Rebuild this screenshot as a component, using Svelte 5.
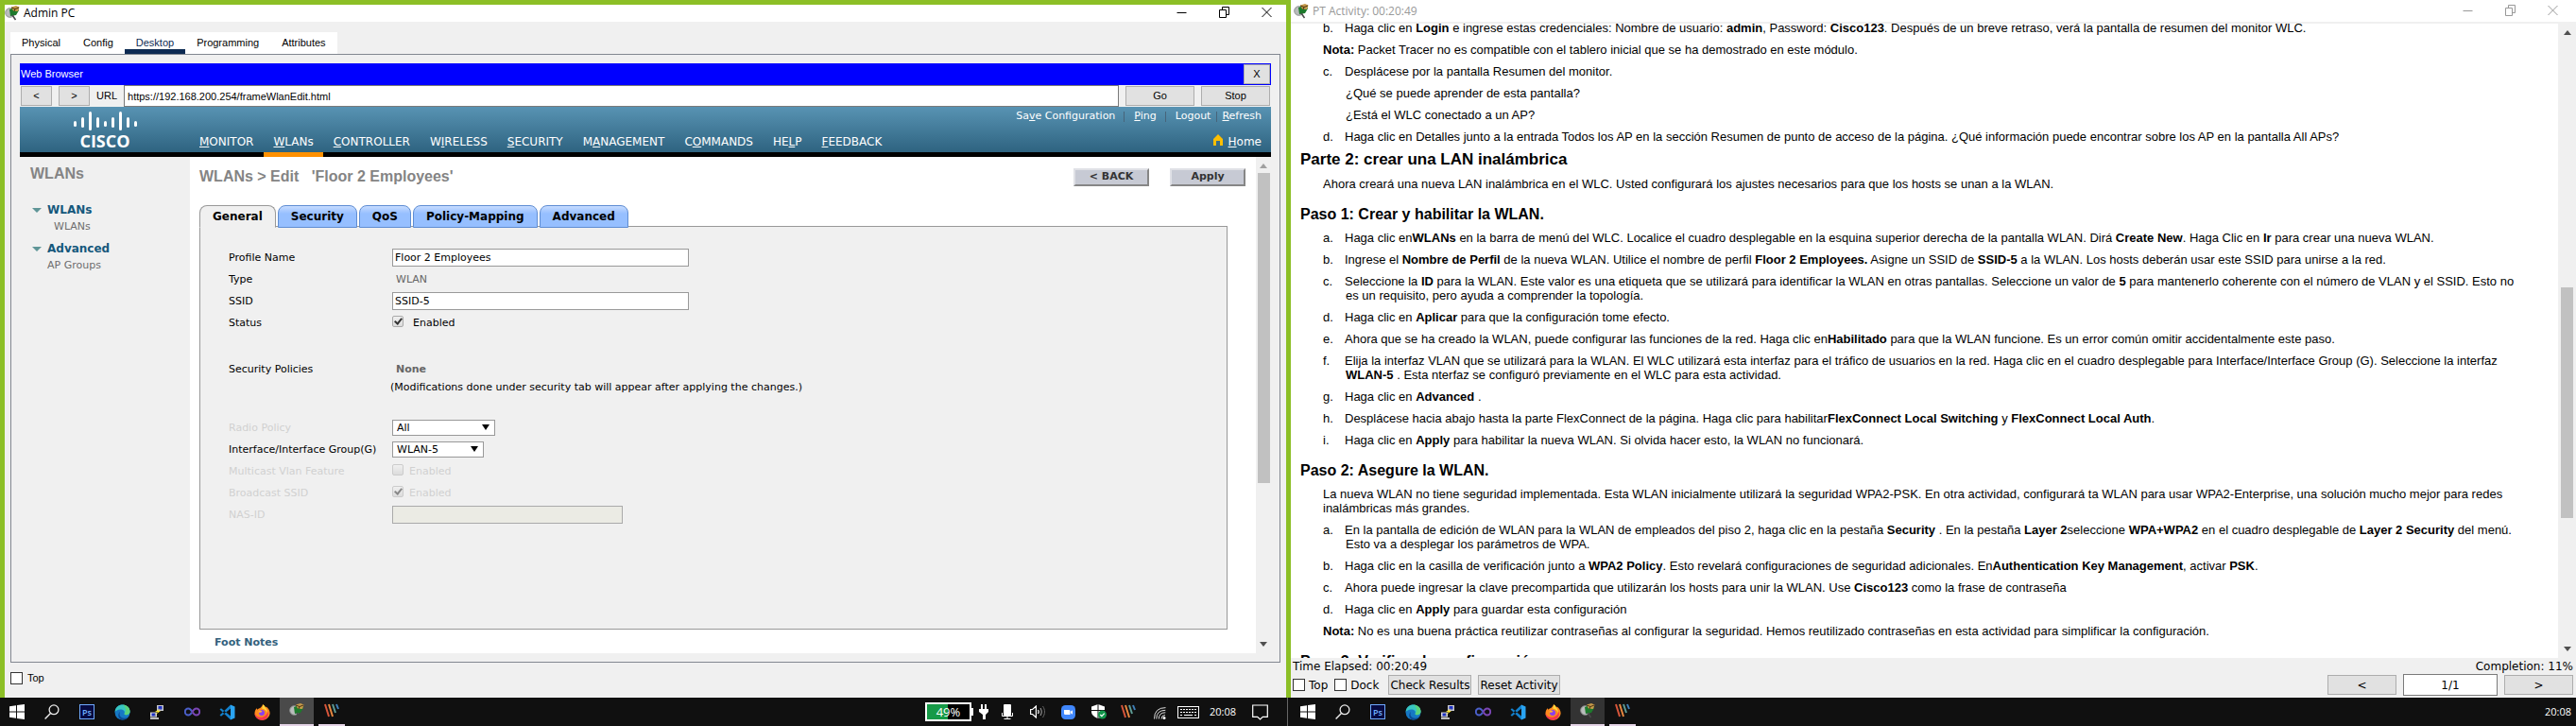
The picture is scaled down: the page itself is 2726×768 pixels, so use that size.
<script>
  const tabs = ['Physical', 'Config', 'Desktop', 'Programming', 'Attributes'];
  const menu = [
    ['', 'M', 'ONITOR'], ['', 'W', 'LANs'], ['', 'C', 'ONTROLLER'], ['W', 'I', 'RELESS'],
    ['', 'S', 'ECURITY'], ['M', 'A', 'NAGEMENT'], ['C', 'O', 'MMANDS'], ['HE', 'L', 'P'], ['', 'F', 'EEDBACK']
  ];
  const links = [['Sa', 'v', 'e Configuration'], ['', 'P', 'ing'], ['Logout', '', ''], ['', 'R', 'efresh']];
  const wlanTabs = ['General', 'Security', 'QoS', 'Policy-Mapping', 'Advanced'];
  const logoBars = [[2, 11, 6], [10, 7, 11], [18, 1, 20], [26, 7, 11], [34, 11, 6], [42, 7, 11], [50, 1, 20], [58, 7, 11], [66, 11, 6]];

  let profile = $state('Floor 2 Employees');
  let ssid = $state('SSID-5');
  let url = $state('https://192.168.200.254/frameWlanEdit.html');
  let page = $state('1/1');
</script>

{#snippet tracer()}
  <svg width="16" height="16" viewBox="0 0 16 16" aria-hidden="true">
    <circle cx="5.500" cy="7.500" r="4.800" fill="#b9bcbc" stroke="#8d9090" />
    <path d="M5 4 13 1l2 4-3 5-6 1z" fill="#1d7a2c" />
    <path d="M7 1.500 12 0l3.500 1.500L14 6l-5-.5z" fill="#c79a4a" />
    <path d="m7 2 4 1.500L15 2m-4 1.500L10 6" stroke="#4b3512" fill="none" />
    <path d="m8 10 3.500 5" stroke="#4a4a4a" stroke-width="1.500" />
  </svg>
{/snippet}

{#snippet controls()}
  <div class="controls">
    <button aria-label="Minimizar"><svg width="11" height="12" viewBox="0 0 11 12"><path d="M.5 6.500h10" stroke="currentColor" /></svg></button>
    <button aria-label="Maximizar"><svg width="11" height="12" viewBox="0 0 11 12"><path d="M.5 3.500h7v8h-7zM3.500 3.500v-3h7v8h-3" stroke="currentColor" fill="none" /></svg></button>
    <button aria-label="Cerrar"><svg width="11" height="12" viewBox="0 0 11 12"><path d="m.5 1 10 10m0-10-10 10" stroke="currentColor" /></svg></button>
  </div>
{/snippet}

{#snippet stripes()}
  <svg width="17" height="16" viewBox="0 0 17 16" aria-hidden="true">
    <path d="m1 1 4 13" stroke="#d8563b" stroke-width="2" />
    <path d="m5 1 4 13" stroke="#e8873f" stroke-width="2" />
    <path d="m9 1 3 9" stroke="#5e9c94" stroke-width="2" />
    <path d="m13 1 2 5" stroke="#3f7fb8" stroke-width="2" />
  </svg>
{/snippet}

{#snippet apps()}
  <nav class="apps" aria-label="Aplicaciones">
    <button aria-label="Inicio"><svg width="16" height="16" viewBox="0 0 16 16"><path d="M0 2.300 7 1.300v6.200H0zM8 1.100 16 0v7.500H8zM0 8.500h7v6.200l-7-1zM8 8.500h8V16l-8-1.100z" fill="#fff" /></svg></button>
    <button aria-label="Buscar"><svg width="16" height="16" viewBox="0 0 16 16"><circle cx="10" cy="5.800" r="4.900" fill="none" stroke="#eee" stroke-width="1.300" /><path d="M6.500 9.500.6 15.500" stroke="#eee" stroke-width="1.400" /></svg></button>
    <button aria-label="Photoshop"><svg width="16" height="16" viewBox="0 0 16 16"><rect x=".5" y=".5" width="15" height="15" fill="#060a42" stroke="#6fa9ff" /><text x="8" y="11.500" text-anchor="middle" font-family="Open Sans, sans-serif" font-size="9" font-weight="600" fill="#6fb0ff">Ps</text></svg></button>
    <button aria-label="Edge"><svg width="17" height="17" viewBox="0 0 17 17"><circle cx="8.500" cy="8.500" r="8" fill="#1678c4" /><path d="M.6 8C1 3 5 .3 9 .5c4.500.2 7.500 3.500 7.500 7 0 3-2.500 4-4.500 3.700-1.500-.2-1.700-1-1.200-2C11.500 7 9 5.300 6.500 5.500 3.500 5.700 1.300 7 .6 8z" fill="#38c7c0" /><path d="M9 .5c4.500.2 7.500 3.500 7.500 7 0 3-2.500 4-4.500 3.700-1-.2-1.500-.7-1.400-1.300C13 8 12.500 3 9 .5z" fill="#5ad27b" /><path d="M6 8c-1.300 3 0 6.500 4.500 6.700 2 0 3.700-.6 4.900-1.600C13.500 16 10.500 17 8 16.400 4 15.500 3 10.500 6 8z" fill="#0c4a93" /></svg></button>
    <button aria-label="PuTTY"><svg width="16" height="16" viewBox="0 0 16 16"><path d="M8 1h7v6H8z" fill="#c9c9c9" /><path d="M9.500 2h4v3.500h-4z" fill="#1a2fc4" /><path d="M1 8.500h7v5H1z" fill="#d5d5d5" /><path d="M2.500 9.500h4v3h-4z" fill="#1a2fc4" /><path d="M1 14h9v2H1z" fill="#bbb" /><path d="m12 4-6 4h3l-4 4 7-5H9z" fill="#ffe92e" /></svg></button>
    <button aria-label="Visual Studio"><svg width="17" height="10" viewBox="0 0 17 10"><path d="M8.500 5C7 2.500 5.800 1.500 4.300 1.500a3.500 3.500 0 0 0 0 7C5.800 8.500 7 7.500 8.500 5" fill="none" stroke="#4a5fc9" stroke-width="2" /><path d="M8.500 5c1.500-2.500 2.700-3.500 4.200-3.500a3.500 3.500 0 0 1 0 7C11.200 8.500 10 7.500 8.500 5" fill="none" stroke="#7b46b5" stroke-width="2" /></svg></button>
    <button aria-label="Visual Studio Code"><svg width="17" height="17" viewBox="0 0 17 17"><path d="M12 .5v4L2 12.800.5 11.500zM12 16.500v-4L2 4.200.5 5.500z" fill="#1380cc" /><path d="m12 .5 4.500 2v12l-4.500 2z" fill="#2aa4f2" /></svg></button>
    <button aria-label="Firefox"><svg width="17" height="17" viewBox="0 0 17 17"><path d="M9 .3c2 1 2.500 2.200 2.900 3.200l.8-1c2.500 2 4 4.500 3.900 7-.2 4-3.700 7.200-8 7.200S.5 13.500.5 9.500C.5 7.500 1.500 5.500 2.700 4c0 .8.200 1.500.6 1.800C4.300 4.600 5 4.300 6 4.200 7 3.500 8.700 2 9 .3z" fill="#ff8a1e" /><path d="M.5 9.500c1 3.500 5 5 8.500 4 3-.9 5-3 5.500-6 1.500 5-1.500 9.200-6 9.200-4.500 0-8-3-8-7.200z" fill="#f5364d" /><path d="M9 .3c2 1 2.500 2.200 2.900 3.200 1.500 1.800 2 3.500 1.600 5.500C12.500 6 10.500 5 8 4.500 8.800 3 9 2 9 .3z" fill="#ffd43b" /><circle cx="8" cy="9" r="3" fill="#8b3ff0" /><path d="M5 6.800c1.500-.5 2.500 0 3.500 1-1 1-2.500 1.200-4 .7z" fill="#ffb52b" /></svg></button>
    <button class="open" aria-label="Packet Tracer">{@render tracer()}</button>
    <button class="running" aria-label="Webex">{@render stripes()}</button>
  </nav>
{/snippet}

{#snippet scroll(before, thumb, after)}
  <div class="scroll" aria-hidden="true">
    <svg width="8" height="5" viewBox="0 0 8 5"><path d="M0 5 4 0l4 5z" fill="currentColor" /></svg>
    <div class="track">
      <i style="flex-grow: {before}"></i><b style="flex-grow: {thumb}"></b><i style="flex-grow: {after}"></i>
    </div>
    <svg class="down" width="8" height="5" viewBox="0 0 8 5"><path d="M0 0h8L4 5z" fill="#505050" /></svg>
  </div>
{/snippet}

<main class="screens">
  <section class="screen">
    <div class="window framed">
      <header class="title">
        {@render tracer()}<span>Admin PC</span>{@render controls()}
      </header>
      <div class="device">
        <nav class="device-tabs">
          {#each tabs as t}
            <button class:active={t === 'Desktop'}>{t}</button>
          {/each}
        </nav>
        <div class="frame">
          <div class="browser-title"><span>Web Browser</span><button class="flat">X</button></div>
          <div class="address">
            <button class="flat arrow">&lt;</button>
            <button class="flat arrow">&gt;</button>
            <label for="url">URL</label>
            <input id="url" bind:value={url} />
            <button class="flat wide">Go</button>
            <button class="flat wide">Stop</button>
          </div>

          <header class="cisco">
            <div class="logo">
              <svg width="70" height="43" viewBox="0 0 70 43" role="img" aria-label="Cisco">
                {#each logoBars as [x, y, h]}
                  <rect x={x - 1} {y} width="3" height={h} rx="1.500" fill="#fff" />
                {/each}
                <text x="34" y="39" text-anchor="middle" font-family="Open Sans, sans-serif" font-size="18" font-weight="700" fill="#fff">CISCO</text>
              </svg>
            </div>
            <div class="bars">
              <div class="links">
                {#each links as [a, k, b]}<a href="#top">{a}<u>{k}</u>{b}</a>{/each}
              </div>
              <nav class="menu">
                {#each menu as [a, k, b], i}<a href="#top" class:active={i === 1}>{a}<u>{k}</u>{b}</a>{/each}
                <a class="home" href="#top"><svg width="10" height="12" viewBox="0 0 10 12" aria-hidden="true"><path d="M5 0 0 5v7h3V7h4v5h3V5z" fill="#fdbf00" /></svg><span><u>H</u>ome</span></a>
              </nav>
            </div>
          </header>

          <div class="page">
            <aside>
              <h2>WLANs</h2>
              <h3><i></i>WLANs</h3>
              <a class="deep" href="#top">WLANs</a>
              <h3><i></i>Advanced</h3>
              <a href="#top">AP Groups</a>
            </aside>
            <div class="content">
              <div class="heading">
                <h2>WLANs &gt; Edit &nbsp; 'Floor 2 Employees'</h2>
                <button class="raised">&lt; BACK</button>
                <button class="raised">Apply</button>
              </div>
              <div class="wlan-tabs">
                {#each wlanTabs as t, i}<button class:active={i === 0}>{t}</button>{/each}
              </div>
              <form class="panel">
                <div class="row"><label for="profile">Profile Name</label><input id="profile" class="text" bind:value={profile} /></div>
                <div class="row"><span>Type</span><span class="value">WLAN</span></div>
                <div class="row"><label for="ssid">SSID</label><input id="ssid" class="text" bind:value={ssid} /></div>
                <div class="row"><span>Status</span><label class="check spaced"><input type="checkbox" checked />Enabled</label></div>
                <div class="row policies"><span>Security Policies</span><b class="value">None</b></div>
                <p>(Modifications done under security tab will appear after applying the changes.)</p>
                <div class="row off"><label for="radio">Radio Policy</label><span class="select"><select id="radio" class="radio"><option>All</option></select></span></div>
                <div class="row"><label for="iface">Interface/Interface Group(G)</label><span class="select"><select id="iface"><option>WLAN-5</option></select></span></div>
                <div class="row off"><span>Multicast Vlan Feature</span><label class="check"><input type="checkbox" disabled />Enabled</label></div>
                <div class="row off"><span>Broadcast SSID</span><label class="check"><input type="checkbox" checked disabled />Enabled</label></div>
                <div class="row off"><label for="nas">NAS-ID</label><input id="nas" class="text short" disabled /></div>
              </form>
              <h4>Foot Notes</h4>
            </div>
            {@render scroll(0, 329, 164)}
          </div>
        </div>
        <label class="box top"><input type="checkbox" />Top</label>
      </div>
    </div>
    <footer class="taskbar">
      {@render apps()}
      <div class="tray">
        <div class="battery">49%</div>
        <svg width="10" height="16" viewBox="0 0 10 16" aria-hidden="true"><path d="M2 0h2v5h2V0h2v5h2v3L7 11v5H4v-5L0 8V5h2z" fill="#fff" /></svg>
        <svg class="mic" width="12" height="16" viewBox="0 0 12 16" aria-hidden="true"><rect x="2" width="8" height="12" rx="1" fill="#fff" /><path d="M.5 9v3.500h11V9M6 13v2.500M2.500 15.500h7" stroke="#fff" fill="none" /></svg>
        <svg class="sound" width="17" height="14" viewBox="0 0 17 14" aria-hidden="true"><path d="M.6 4.500h2l3.800-3.500v12L2.600 9.500h-2zM8.500 5c.8 1.300.8 2.700 0 4" stroke="#fff" fill="none" stroke-width="1.200" /><path d="M11 3c1.600 2.500 1.600 5.500 0 8" stroke="#aaa" fill="none" /><path d="M13.500 1c2.600 3.700 2.600 8.300 0 12" stroke="#666" fill="none" /></svg>
        <svg class="zoom" width="15" height="15" viewBox="0 0 15 15" aria-hidden="true"><rect width="15" height="15" rx="4.500" fill="#4087fc" /><path d="M3 5h5.200q1.300 0 1.300 1.300V10H4.300Q3 10 3 8.700zM10 6.700 12 5.200v4.600l-2-1.500z" fill="#fff" /></svg>
        <svg class="shield" width="16" height="16" viewBox="0 0 16 16" aria-hidden="true"><path d="M7 0 14 2.500V8c0 3-3 5.500-7 7C3 13.500 0 11 0 8V2.500z" fill="#fff" /><path d="M7 0v15M0 6.500h14" stroke="#101010" /><circle cx="11.500" cy="11" r="4.500" fill="#12964a" /><path d="m9.300 11 1.600 1.600 2.800-3" stroke="#fff" fill="none" stroke-width="1.200" /></svg>
        {@render stripes()}
        <svg class="wifi" width="13" height="13" viewBox="0 0 13 13" aria-hidden="true"><circle cx="11" cy="11.500" r="1.500" fill="#fff" /><path d="M8 12.500q0-4 4-4M5.300 12.500q0-6.700 7-6.700M2.800 12.500Q2.800 3.300 12.300 3.300M.5 12.500Q.5.600 12.500.600" stroke="#ddd" fill="none" /></svg>
        <svg class="keys" width="23" height="13" viewBox="0 0 23 13" aria-hidden="true"><rect x=".5" y=".5" width="22" height="12" fill="none" stroke="#fff" /><path d="M3 3.500h17M3 6.500h17" stroke="#fff" stroke-dasharray="2 1" /><path d="M3 9.500h2m2 0h9m2 0h2" stroke="#fff" /></svg>
        <time>20:08</time>
        <svg class="note" width="17" height="17" viewBox="0 0 17 17" aria-hidden="true"><path d="M.7 1h15.600v12.300h-5L8.500 16l-2.800-2.700h-5z" fill="none" stroke="#fff" stroke-width="1.200" /></svg>
      </div>
    </footer>
  </section>

  <section class="screen">
    <div class="window">
      <header class="title idle">
        {@render tracer()}<span>PT Activity: 00:20:49</span>{@render controls()}
      </header>
      <div class="reader">
        <article>
          <p class="item"><span>b.</span>Haga clic en <b>Login</b> e ingrese estas credenciales: Nombre de usuario: <b>admin</b>, Password: <b>Cisco123</b>. Después de un breve retraso, verá la pantalla de resumen del monitor WLC.</p>
          <p><b>Nota:</b> Packet Tracer no es compatible con el tablero inicial que se ha demostrado en este módulo.</p>
          <p class="item"><span>c.</span>Desplácese por la pantalla Resumen del monitor.</p>
          <p class="question">¿Qué se puede aprender de esta pantalla?</p>
          <p class="question">¿Está el WLC conectado a un AP?</p>
          <p class="item"><span>d.</span>Haga clic en Detalles junto a la entrada Todos los AP en la sección Resumen de punto de acceso de la página. ¿Qué información puede encontrar sobre los AP en la pantalla All APs?</p>
          <h2>Parte 2: crear una LAN inalámbrica</h2>
          <p>Ahora creará una nueva LAN inalámbrica en el WLC. Usted configurará los ajustes necesarios para que los hosts se unan a la WLAN.</p>
          <h3>Paso 1: Crear y habilitar la WLAN.</h3>
          <p class="item"><span>a.</span>Haga clic en<b>WLANs</b> en la barra de menú del WLC. Localice el cuadro desplegable en la esquina superior derecha de la pantalla WLAN. Dirá <b>Create New</b>. Haga Clic en <b>Ir</b> para crear una nueva WLAN.</p>
          <p class="item"><span>b.</span>Ingrese el <b>Nombre de Perfil</b> de la nueva WLAN. Utilice el nombre de perfil <b>Floor 2 Employees.</b> Asigne un SSID de <b>SSID-5</b> a la WLAN. Los hosts deberán usar este SSID para unirse a la red.</p>
          <p class="item"><span>c.</span>Seleccione la <b>ID</b> para la WLAN. Este valor es una etiqueta que se utilizará para identificar la WLAN en otras pantallas. Seleccione un valor de <b>5</b> para mantenerlo coherente con el número de VLAN y el SSID. Esto no es un requisito, pero ayuda a comprender la topología.</p>
          <p class="item"><span>d.</span>Haga clic en <b>Aplicar</b> para que la configuración tome efecto.</p>
          <p class="item"><span>e.</span>Ahora que se ha creado la WLAN, puede configurar las funciones de la red. Haga clic en<b>Habilitado</b> para que la WLAN funcione. Es un error común omitir accidentalmente este paso.</p>
          <p class="item"><span>f.</span>Elija la interfaz VLAN que se utilizará para la WLAN. El WLC utilizará esta interfaz para el tráfico de usuarios en la red. Haga clic en el cuadro desplegable para Interface/Interface Group (G). Seleccione la interfaz <b>WLAN-5</b> . Esta nterfaz se configuró previamente en el WLC para esta actividad.</p>
          <p class="item"><span>g.</span>Haga clic en <b>Advanced</b> .</p>
          <p class="item"><span>h.</span>Desplácese hacia abajo hasta la parte FlexConnect de la página. Haga clic para habilitar<b>FlexConnect Local Switching</b> y <b>FlexConnect Local Auth</b>.</p>
          <p class="item"><span>i.</span>Haga clic en <b>Apply</b> para habilitar la nueva WLAN. Si olvida hacer esto, la WLAN no funcionará.</p>
          <h3>Paso 2: Asegure la WLAN.</h3>
          <p>La nueva WLAN no tiene seguridad implementada. Esta WLAN inicialmente utilizará la seguridad WPA2-PSK. En otra actividad, configurará ta WLAN para usar WPA2-Enterprise, una solución mucho mejor para redes inalámbricas más grandes.</p>
          <p class="item"><span>a.</span>En la pantalla de edición de WLAN para la WLAN de empleados del piso 2, haga clic en la pestaña <b>Security</b> . En la pestaña <b>Layer 2</b>seleccione <b>WPA+WPA2</b> en el cuadro desplegable de <b>Layer 2 Security</b> del menú. Esto va a desplegar los parámetros de WPA.</p>
          <p class="item"><span>b.</span>Haga clic en la casilla de verificación junto a <b>WPA2 Policy</b>. Esto revelará configuraciones de seguridad adicionales. En<b>Authentication Key Management</b>, activar <b>PSK</b>.</p>
          <p class="item"><span>c.</span>Ahora puede ingresar la clave precompartida que utilizarán los hosts para unir la WLAN. Use <b>Cisco123</b> como la frase de contraseña</p>
          <p class="item"><span>d.</span>Haga clic en <b>Apply</b> para guardar esta configuración</p>
          <p><b>Nota:</b> No es una buena práctica reutilizar contraseñas al configurar la seguridad. Hemos reutilizado contraseñas en esta actividad para simplificar la configuración.</p>
          <h3>Paso 3: Verificar la configuración</h3>
        </article>
        {@render scroll(262, 243, 131)}
      </div>
      <div class="status"><span>Time Elapsed: 00:20:49</span><span>Completion: 11%</span></div>
      <div class="actions">
        <label class="box"><input type="checkbox" />Top</label>
        <label class="box"><input type="checkbox" />Dock</label>
        <button class="flat">Check Results</button>
        <button class="flat">Reset Activity</button>
        <span class="fill"></span>
        <button class="flat wide">&lt;</button>
        <input class="page-no" aria-label="Página" bind:value={page} />
        <button class="flat wide">&gt;</button>
      </div>
    </div>
    <footer class="taskbar second">
      {@render apps()}
      <div class="tray"><time>20:08</time></div>
    </footer>
  </section>
</main>

<style>
  :global(body) { margin: 0; background: #101010; }
  * { box-sizing: border-box; }
  button, input, select { font: inherit; color: inherit; margin: 0; padding: 0; border: 0; border-radius: 0; }
  button { background: none; }
  svg { display: block; flex: none; }
  h2, h3, h4, p { margin: 0; }
  a { color: inherit; text-decoration: none; }

  .screens { display: grid; grid-template-columns: 1366fr 1360fr; height: 100vh; color: #000; }
  .screen { display: flex; flex-direction: column; min-width: 0; min-height: 0; }
  .window { flex: 1; display: flex; flex-direction: column; min-height: 0; background: #f0f0f0; }
  .framed { border: 5px solid #8cbf26; border-bottom: 0; }

  .title { display: flex; align-items: center; gap: 4px; height: 18px; background: #fff; font: 12px/16px "Open Sans", "Noto Sans", sans-serif; flex: none; }
  .idle { height: 23px; padding: 0 4px 0 3px; color: #999; }
  .controls { display: flex; gap: 3px; margin-left: auto; padding-bottom: 2px; }
  .controls button { width: 42px; display: flex; justify-content: center; }

  .device { flex: 1; display: flex; flex-direction: column; min-height: 0; padding: 11px 6px 0; font: 11px/13px "Liberation Sans", Arial, sans-serif; }
  .device-tabs { display: flex; align-self: flex-start; background: #fff; }
  .device-tabs button { height: 23px; padding: 0 12px; border-top: 5px solid transparent; border-bottom: 5px solid transparent; line-height: 13px; }
  .device-tabs .active { color: #0c2a52; border-bottom-color: #0c2a52; }
  .frame { flex: 1; display: flex; flex-direction: column; min-height: 0; border: 1px solid #828790; padding: 9px; }
  .browser-title { display: flex; align-items: center; justify-content: space-between; height: 23px; padding: 1px; background: #0000ff; color: #fff; flex: none; }
  .flat { background: #e1e1e1; border: 1px solid #adadad; color: #000; height: 21px; }
  .browser-title .flat { width: 28px; }
  .address { display: flex; align-items: center; gap: 7px; height: 23px; padding: 0 1px; flex: none; }
  .arrow { width: 33px; }
  .wide { width: 73px; }
  .address input { flex: 1; min-width: 0; height: 23px; padding: 0 3px; border: 1px solid #7a7a7a; background: #fff; }

  .cisco { display: flex; height: 53px; flex: none; color: #fff; background: linear-gradient(#5893b3 0, #2e6380 48px, #000 48px); font: 12px/16px "DejaVu Sans", Verdana, sans-serif; }
  .logo { width: 180px; flex: none; padding: 4px 0 0 56px; }
  .bars { flex: 1; min-width: 0; }
  .links { display: flex; justify-content: flex-end; height: 20px; padding: 3px 10px 0 0; font-size: 11px; line-height: 14px; }
  .links a + a { margin-left: 9px; padding-left: 11px; }
  .links a + a { background: linear-gradient(#47647a, #47647a) 0 2px / 1px 11px no-repeat; }
  .links a:last-child { margin-left: 6px; padding-left: 6px; }
  .menu { display: flex; gap: 1px; height: 33px; }
  .menu a { padding: 9px 10px 0; border-bottom: 5px solid transparent; }
  .menu .active { border-bottom-color: #ff9000; }
  .menu .home { display: flex; gap: 6px; margin-left: auto; }

  .page { flex: 1; display: flex; min-height: 0; font: 11px/14px "DejaVu Sans", Verdana, sans-serif; }
  aside { width: 180px; flex: none; display: flex; flex-direction: column; padding: 8px 0 0 11px; color: #6e6e6e; }
  .page h2 { font: bold 16px/20px "Liberation Sans", Arial, sans-serif; color: #848484; }
  aside h2 { margin-bottom: 20px; }
  aside h3 { display: flex; align-items: center; gap: 6px; font-size: 12px; line-height: 16px; color: #15587c; padding-left: 2px; }
  aside h3 i { border: 5px solid transparent; border-top-color: #5f9597; border-bottom: 0; }
  aside a { margin: 3px 0 8px 18px; }
  aside .deep { margin-left: 25px; }
  .content { flex: 1; min-width: 0; display: flex; flex-direction: column; background: #fff; padding: 10px 30px 0 10px; }
  .heading { display: flex; align-items: center; gap: 22px; height: 22px; margin-right: -19px; flex: none; }
  .heading h2 { flex: 1; }
  .raised { width: 80px; height: 19px; background: #c7cad4; border: 2px solid; border-color: #e0e1e6 #868686 #868686 #e0e1e6; font-weight: bold; line-height: 14px; color: #333; }
  .wlan-tabs { display: flex; gap: 2px; margin: 19px 0 -2px; position: relative; flex: none; }
  .wlan-tabs button { height: 24px; padding: 0 13px; font-weight: bold; font-size: 12px; border: 1px solid #5f8dd3; border-radius: 8px 8px 0 0; background: linear-gradient(#c7dcff, #96bfff 8px); }
  .wlan-tabs .active { background: #f0f0f0; border-color: #999; border-bottom-color: #f0f0f0; }
  .panel { flex: 1; min-height: 0; border: 1px solid #999; background: #f0f0f0; padding: 21px 0 0 30px; }
  .row { display: grid; grid-template-columns: 173px 1fr; align-items: center; height: 23px; }
  .row .value { padding-left: 4px; color: #666; }
  .policies { margin-top: 26px; }
  .panel p { margin: 0 0 23px 171px; line-height: 16px; }
  .off { color: #d0d0d0; }
  .text { width: 314px; height: 19px; padding: 0 2px; border: 1px solid #999; background: #fff; }
  .short { width: 244px; background: #ebebe4; border-color: #aaa; }
  .select { position: relative; justify-self: start; display: flex; color: #000; }
  .select::after { content: ""; position: absolute; right: 6px; top: 5px; border: 4px solid transparent; border-top: 6px solid #000; border-bottom: 0; pointer-events: none; }
  select { appearance: none; width: 97px; height: 17px; padding: 0 4px; border: 1px solid #999; background: #fff; }
  select.radio { width: 109px; }
  .check { display: flex; align-items: center; gap: 6px; }
  .spaced { gap: 10px; }
  .check input { appearance: none; position: relative; width: 12px; height: 12px; margin-bottom: 4px; border: 1px solid #aaa; border-radius: 2px; background: linear-gradient(#f0f0f0, #dcdcdc); }
  .check input:checked::after { content: ""; position: absolute; left: 3px; top: 0; width: 3px; height: 6px; border: solid #333; border-width: 0 2px 2px 0; transform: rotate(40deg); }
  .check input:disabled { border-color: #ccc; }
  .check input:disabled::after { border-color: #888; }
  h4 { font-size: 11px; line-height: 14px; color: #33617d; padding: 7px 16px 4px; flex: none; }

  .scroll { display: flex; flex-direction: column; align-items: center; flex: none; width: 16px; padding: 7px 0; background: #f0f0f0; color: #a0a0a0; }
  .track { flex: 1; display: flex; flex-direction: column; width: 13px; margin: 5px 0; }
  .track b { background: #c1c1c1; }

  .box { display: flex; align-items: center; gap: 5px; }
  .box input { appearance: none; width: 13px; height: 13px; border: 1px solid #333; background: #fff; }
  .top { height: 37px; padding-bottom: 5px; flex: none; }

  .reader { flex: 1; display: flex; min-height: 0; overflow: hidden; background: #fff; border-top: 2px solid #f0f0f0; }
  .reader .scroll { width: 19px; color: #505050; }
  article { flex: 1; min-width: 0; margin-top: -3px; padding: 0 37px 0 34px; font: 13px/15px "Liberation Sans", Arial, sans-serif; }
  article p { margin-bottom: 8px; }
  .item { padding-left: 24px; text-indent: -24px; }
  .item span { display: inline-block; width: 23px; text-indent: 0; }
  .question { padding-left: 24px; }
  article h2, article h3 { margin-left: -24px; font-size: 16px; line-height: 18px; }
  article h2 { margin-bottom: 9px; font-size: 17px; }
  article h3 { margin-top: 16px; margin-bottom: 8px; }
  .status, .actions { display: flex; flex: none; padding: 0 3px 0 2px; font: 12px/14px "DejaVu Sans", Verdana, sans-serif; }
  .status { justify-content: space-between; height: 17px; padding-top: 2px; }
  .actions { align-items: center; height: 25px; padding-bottom: 2px; gap: 7px; }
  .actions .box { gap: 4px; }
  .actions .box + .box { margin-right: 3px; }
  .actions button { padding: 0 1px; }
  .fill { flex: 1; }
  .page-no { width: 100px; height: 23px; text-align: center; border: 1px solid #7a7a7a; background: #fff; }

  .taskbar { display: flex; justify-content: space-between; height: 30px; flex: none; background: #101010; color: #fff; font: 11px/16px "Open Sans", "Noto Sans", sans-serif; }
  .framed + .taskbar { border-right: 1px solid #666; margin-right: 3px; }
  .apps { display: flex; gap: 1px; }
  .apps button { width: 36px; display: flex; align-items: center; justify-content: center; }
  .apps .open { background: #4a4a4a; border-bottom: 2px solid #e4d3e6; }
  .second .open { background: #333; }
  .apps .running { width: 28px; margin-left: 4px; border-bottom: 2px solid #e4d3e6; }
  .tray { display: flex; align-items: center; }
  .battery { position: relative; width: 49px; height: 20px; margin-right: 8px; border: 2px solid #fff; background: linear-gradient(90deg, #169a47 50%, #000 50%); font-size: 13px; text-align: center; }
  .battery::after { content: ""; position: absolute; right: -4px; top: 4px; width: 2px; height: 8px; background: #fff; }
  .mic { margin: 0 18px 0 14px; }
  .zoom { margin: 0 17px 0 16px; }
  .shield { margin-right: 15px; }
  .wifi { margin: 3px 12px 0 18px; }
  .keys { margin-right: 11px; }
  .note { margin: 0 20px 0 17px; }
  .second .tray { padding-right: 5px; }
</style>
